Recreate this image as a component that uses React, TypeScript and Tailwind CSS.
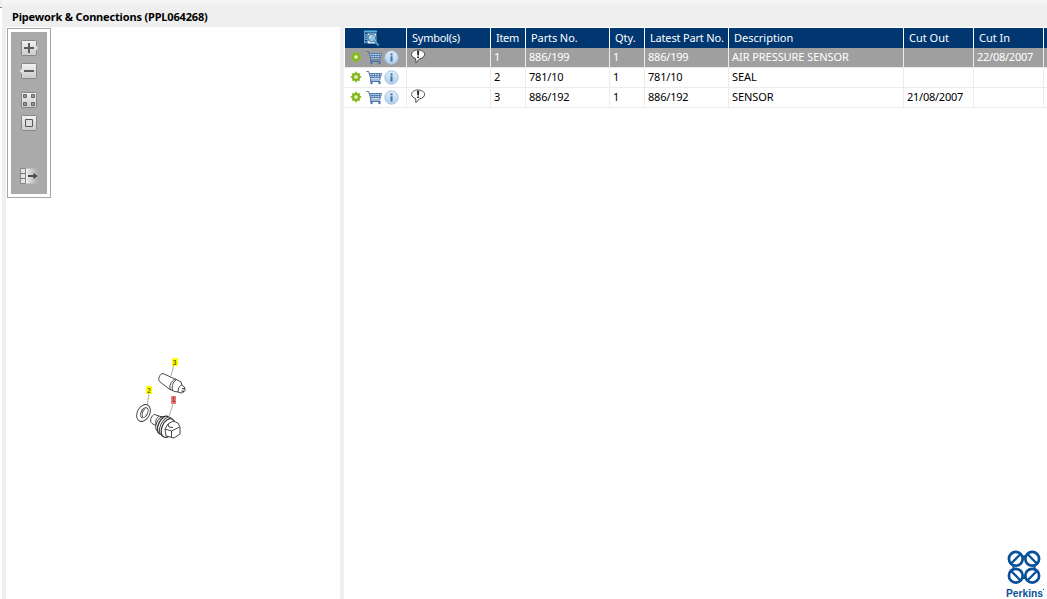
import type { ReactNode } from "react"

interface Part {
  item: string
  partNo: string
  qty: string
  latest: string
  description: string
  cutOut?: string
  cutIn?: string
  symbol?: boolean
}

const parts: Part[] = [
  {
    item: "1",
    partNo: "886/199",
    qty: "1",
    latest: "886/199",
    description: "AIR PRESSURE SENSOR",
    cutIn: "22/08/2007",
    symbol: true,
  },
  { item: "2", partNo: "781/10", qty: "1", latest: "781/10", description: "SEAL" },
  {
    item: "3",
    partNo: "886/192",
    qty: "1",
    latest: "886/192",
    description: "SENSOR",
    cutOut: "21/08/2007",
    symbol: true,
  },
]

const columns =
  "grid grid-cols-[62px_84px_35px_84px_35px_84px_175px_70px_70px_3px]"

const GearIcon = () => (
  <svg width="12" height="12" viewBox="0 0 12 12">
    <g stroke="#8fbe2b" strokeWidth="2">
      <path d="M6 .8v10.4M.8 6h10.4M2.4 2.4l7.2 7.2M9.6 2.4l-7.2 7.2" />
    </g>
    <circle cx="6" cy="6" r="3" fill="none" stroke="#82b71e" strokeWidth="2.2" />
    <circle cx="6" cy="6" r="1.8" fill="#e6f1cd" />
  </svg>
)

const CartIcon = () => (
  <svg width="17" height="15" viewBox="0 0 17 15" fill="none" stroke="#4674ad">
    <path d="M3.4 3h12.4l-1.6 5.5H4.9z" fill="#c3d5ea" stroke="none" />
    <path d="M3 3.5h13M4 5.5h11.3M4.6 7.5h10.2" strokeWidth=".8" />
    <path d="M6 3v5.5M8.5 3v5.5M11 3v5.5M13.5 3v5.5M15.7 3l-2 7" strokeWidth=".7" />
    <path d="M.5 1.500h2.200l2.300 8.500h9M4.500 9.800v1.700h10" strokeWidth="1" />
    <circle cx="5.5" cy="13" r="1.2" fill="#4674ad" stroke="none" />
    <circle cx="13.5" cy="13" r="1.2" fill="#4674ad" stroke="none" />
  </svg>
)

const InfoIcon = () => (
  <svg width="15" height="15" viewBox="0 0 15 15">
    <defs>
      <linearGradient id="info" x1="0" y1="0" x2="0" y2="1">
        <stop offset="0" stopColor="#e2eff8" />
        <stop offset="1" stopColor="#b1cfe8" />
      </linearGradient>
    </defs>
    <circle cx="7.5" cy="7.5" r="6.7" fill="url(#info)" stroke="#9dbfdf" strokeWidth=".9" />
    <rect x="6.5" y="3.4" width="2" height="2" fill="#3f70b0" />
    <rect x="6.5" y="6.3" width="2" height="5.2" fill="#3f70b0" />
  </svg>
)

const NoteIcon = () => (
  <svg width="16" height="15" viewBox="0 0 16 15">
    <path
      d="M4.6 9.5C2.3 8.8.6 7.3.6 5.4.6 2.9 3.4 1 7 1s6.6 1.8 6.6 4.3c0 2.3-2.2 4.1-4.900 4.400L5 13.600z"
      fill="#fff"
      stroke="#444"
    />
    <path d="M6 1.800h2.200l-.3 4.700H6.300zM6.200 7.500h1.800v1.600H6.200z" fill="#222" />
  </svg>
)

const SearchPageIcon = () => (
  <svg width="17" height="17" viewBox="0 0 17 17">
    <path d="M1.5 1v12.5" stroke="#4aa2dc" />
    <path d="M1 1.5h13" stroke="#58b3e8" strokeWidth="2" />
    <path d="M3 4v9.5" stroke="#d7eefb" strokeWidth="1.2" strokeDasharray="1.5 .8" />
    <path d="M4.5 3.500h8.800v10H4.500z" fill="#eaf6fd" />
    <circle cx="8.800" cy="8" r="3.900" fill="#8dc4e5" stroke="#547991" strokeWidth="1" />
    <path d="M6.500 8a2.300 2.300 0 0 1 2-2.200" stroke="#dff3ff" fill="none" />
    <path d="M11.700 11.200l4 4.300" stroke="#4f92c4" strokeWidth="2.200" />
  </svg>
)

const PerkinsLogo = () => (
  <svg width="42" height="50" viewBox="0 0 42 50" className="block">
    <g fill="none" stroke="#08509a" strokeWidth="2.7">
      <circle cx="10.800" cy="9.800" r="6.900" />
      <circle cx="27.200" cy="9.800" r="6.900" />
      <circle cx="10.800" cy="26.700" r="6.900" />
      <circle cx="27.200" cy="26.700" r="6.900" />
      <path
        d="M6 14.600L15.600 5M32 14.600L22.400 5M6 21.900L15.600 31.500M32 21.900L22.400 31.500"
        strokeWidth="2.200"
      />
      <path d="M8.500 16.500v3.500M29.500 16.500v3.500M17.500 7.500h3M17.500 29h3" strokeWidth="2" />
    </g>
    <text
      x="1"
      y="47.500"
      textLength="37"
      lengthAdjust="spacingAndGlyphs"
      className="fill-[#08509a] font-['Liberation_Sans',sans-serif] text-[11px] font-bold"
    >
      Perkins
    </text>
    <rect x="38" y="40" width="1" height="1" fill="#08509a" />
  </svg>
)

const ToolIcon = ({ children }: { children: ReactNode }) => (
  <svg width="18" height="16" viewBox="0 0 18 16" className="block shrink-0">
    <defs>
      <linearGradient id="tool" x1="0" y1="0" x2="0" y2="1">
        <stop offset="0" stopColor="#f2f2f2" />
        <stop offset="1" stopColor="#cacaca" />
      </linearGradient>
      <linearGradient id="fade" x1="0" y1="0" x2="1" y2="0">
        <stop offset="0" stopColor="#eeeeee" />
        <stop offset="1" stopColor="#aaaaaa" />
      </linearGradient>
    </defs>
    {children}
  </svg>
)

const ToolBox = () => (
  <rect x="1.5" y=".5" width="15" height="15" rx=".8" fill="url(#tool)" stroke="#888" />
)

const Toolbar = () => (
  <div className="ml-px mt-px h-[170px] w-[44px] border border-[#a5a5a5] bg-white p-[3px]">
    <div className="flex h-[162px] flex-col items-center bg-[#aaaaaa] pt-2">
      <ToolIcon>
        <ToolBox />
        <path d="M16 5.5l1.800 2.500-1.800 2.500" fill="#ddd" stroke="#ccc" />
        <path d="M4 8h10M9 3v10" stroke="#5c5c5c" strokeWidth="2" />
      </ToolIcon>
      <div className="h-[7px]" />
      <ToolIcon>
        <ToolBox />
        <path d="M2 5.500L.3 8 2 10.500" fill="#eee" stroke="#ddd" />
        <path d="M4 8h10" stroke="#5c5c5c" strokeWidth="2" />
      </ToolIcon>
      <div className="h-[13px]" />
      <ToolIcon>
        <ToolBox />
        <g fill="#999" stroke="#666">
          <path d="M3.500 2.500h3v3h-3zM11.500 2.500h3v3h-3zM3.500 10.500h3v3h-3zM11.500 10.500h3v3h-3z" />
        </g>
      </ToolIcon>
      <div className="h-[7px]" />
      <ToolIcon>
        <ToolBox />
        <path d="M5.500 4.500h7v7h-7z" fill="#ddd" stroke="#555" />
      </ToolIcon>
      <div className="h-[37px]" />
      <ToolIcon>
        <path d="M6 .5h12v15H6z" fill="url(#fade)" />
        <path d="M.5.500h5v15h-5z" fill="#e4e4e4" stroke="#888" />
        <path d="M.5 5.500h5M.5 10.500h5" stroke="#777" />
        <path d="M8 8h6" stroke="#4c4c4c" strokeWidth="2" />
        <path d="M13.500 4.800L17.500 8l-4 3.200z" fill="#4c4c4c" />
      </ToolIcon>
    </div>
  </div>
)

const PartsDiagram = () => (
  <svg width="75" height="95" viewBox="0 0 75 95" className="block">
    <g fill="#ffff00">
      <path d="M47 8h6v8h-6zM21 36h6v8h-6z" />
      <path d="M46 46h5v8h-5z" fill="#f47878" />
    </g>
    <g className="fill-[#2a2a10] font-['Liberation_Sans',sans-serif] text-[6.5px]" textAnchor="middle">
      <text x="49.5" y="14.5">3</text>
      <text x="24" y="42.5">2</text>
      <text x="48.5" y="52.3">1</text>
    </g>
    <path d="M48.500 16l-2.500 10M24 44l-1.800 11M48 54l-4.500 14" stroke="#888" strokeWidth=".7" />
    <g fill="#fff" stroke="#333" strokeWidth=".9" strokeLinejoin="round">
      {/* sensor */}
      <path d="M38 23.500l13 6-5.500 10.500-11-8.500c-2-2.500.5-8 3.500-8z" />
      <path d="M50.500 29l5.500 3 1 3-4 7-3.500-.5-4-2c-2-3 .5-8.500 5-10.500z" />
      <path d="M51 30c-3 2-4.500 6-3.500 10" fill="none" />
      <path d="M56.500 35l3 2 .5 3.500-2.500 2.500-4-.5c-1-3 .5-6.500 3-7.500z" />
      <path d="M57 38.500l2.800.5M56.500 41l2.500.3" strokeWidth="1.200" />
      {/* seal */}
      <ellipse cx="18.500" cy="63" rx="6.200" ry="9" transform="rotate(28 18.500 63)" />
      <ellipse cx="19.300" cy="62.700" rx="3.200" ry="5.500" transform="rotate(28 19.300 62.700)" />
      <path d="M20.500 58.500c-2.500 2-4 5-3 8.500" fill="none" />
      {/* air pressure sensor */}
      <path d="M29.500 64.500l9 3-4 10-7.500-4c-3-2-.5-8.500 2.500-9z" />
      <path d="M34 66c-2.500 2-4 5-3 9" fill="none" />
      <ellipse cx="36" cy="74" rx="4.500" ry="8" transform="rotate(25 36 74)" />
      <ellipse cx="38.500" cy="75" rx="5" ry="9.500" transform="rotate(25 38.500 75)" strokeWidth="1.300" />
      <ellipse cx="41" cy="76.500" rx="5.500" ry="10" transform="rotate(25 41 76.500)" />
      <ellipse cx="43" cy="78" rx="6" ry="10" transform="rotate(25 43 78)" strokeWidth="1.200" />
      <path d="M43 74l5-3 5 2 2 4v7l-6 4-8-2-1-7z" />
      <path d="M40 79l6.500 2 8-4M46.500 81v6.500M43 74l1 3 4 .5" fill="none" />
    </g>
  </svg>
)

const HeaderCell = ({ children }: { children?: ReactNode }) => (
  <div className="whitespace-nowrap border-r border-white bg-[#003770] pl-[5px] leading-[20px] text-white">
    {children}
  </div>
)

const PartsTable = () => (
  <div className="ml-px mt-px w-[702px] text-[11px]">
    <div className={`${columns} h-5`}>
      <div className="border-r border-white bg-[#003770] pl-[18px] pt-[2px]">
        <SearchPageIcon />
      </div>
      <HeaderCell><span className="tracking-[-0.25px]">Symbol(s)</span></HeaderCell>
      <HeaderCell><span className="tracking-[-0.3px]">Item</span></HeaderCell>
      <HeaderCell><span className="tracking-[-0.1px]">Parts No.</span></HeaderCell>
      <HeaderCell>Qty.</HeaderCell>
      <HeaderCell><span className="tracking-[-0.18px]">Latest Part No.</span></HeaderCell>
      <HeaderCell>Description</HeaderCell>
      <HeaderCell>Cut Out</HeaderCell>
      <HeaderCell>Cut In</HeaderCell>
      <div className="bg-[#003770]" />
    </div>
    {parts.map((part, index) => (
      <div
        key={part.item}
        className={`${columns} h-5 border-b border-[#ececec] leading-[17px] *:border-r *:border-[#ececec] *:pl-[3px] ${
          index === 0 ? "bg-[#9f9f9f] text-white" : "bg-white text-black"
        }`}
      >
        <div className="flex items-center pb-px">
          <div className="ml-[2px]"><GearIcon /></div>
          <div className="ml-[4px]"><CartIcon /></div>
          <div className="ml-px"><InfoIcon /></div>
        </div>
        <div>{part.symbol && <div className="ml-px pt-px"><NoteIcon /></div>}</div>
        <div>{part.item}</div>
        <div className="tracking-[-0.2px]">{part.partNo}</div>
        <div>{part.qty}</div>
        <div className="tracking-[-0.2px]">{part.latest}</div>
        <div className="whitespace-nowrap tracking-[-0.06px]">{part.description}</div>
        <div className="tracking-[-0.25px]">{part.cutOut}</div>
        <div className="tracking-[-0.25px]">{part.cutIn}</div>
        <div />
      </div>
    ))}
  </div>
)

const App = () => {
  return (
    <div className="flex h-[599px] w-[1047px] overflow-hidden bg-[#efefef] font-['Noto_Sans','Open_Sans',sans-serif]">
      <div className="w-[2px] shrink-0 pt-[7px]">
        <div className="h-full border-t border-[#8a8a8a] bg-white" />
      </div>
      <div className="flex grow flex-col">
        <div className="h-[27px] shrink-0 bg-linear-to-b from-[#f6f6f6] to-[#efefef] to-30% pl-[10px] text-[11px] font-bold leading-[34px] tracking-[-0.17px] text-black">
          Pipework &amp; Connections (PPL064268)
        </div>
        <div className="flex min-h-0 grow">
          <div className="ml-1 w-[334px] bg-white">
            <Toolbar />
            <div className="ml-[119px] mt-[152px]">
              <PartsDiagram />
            </div>
          </div>
          <div className="ml-1 flex grow flex-col justify-between bg-white">
            <PartsTable />
            <div className="self-end">
              <PerkinsLogo />
            </div>
          </div>
        </div>
      </div>
    </div>
  )
}

export default App
